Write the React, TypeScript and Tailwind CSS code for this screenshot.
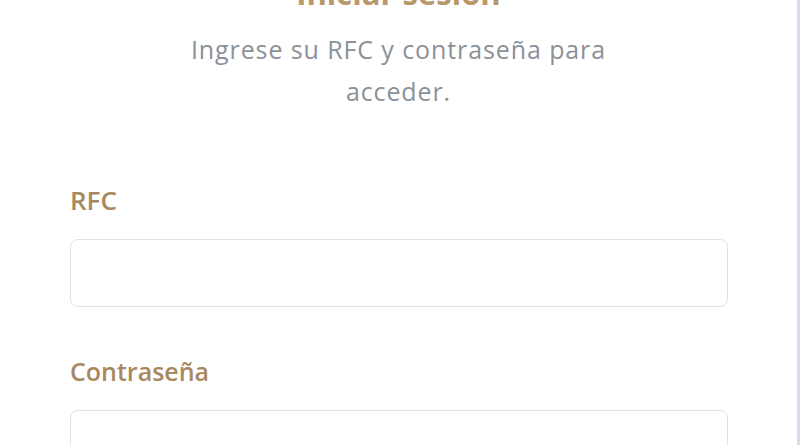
export default function App() {
  return (
    <div className="flex h-[445px] w-[800px] overflow-hidden bg-white" style={{ fontFamily: '"Open Sans", "Noto Sans", sans-serif' }}>
      <div className="flex-1 overflow-hidden">
        <div className="-mt-[27px] flex flex-col items-center">
          <h1 className="text-[31px] leading-[40px] font-bold text-[#b8976a]">Iniciar sesión</h1>
          <p className="mt-[15px] w-[470px] text-center text-[25px] leading-[42px] tracking-[0.9px] text-[#8a9199]">
            Ingrese su RFC y contraseña para acceder.
          </p>
        </div>
        <div className="mt-[72px] pl-[70px] pr-[69px]">
          <label className="block text-[26px] leading-[32px] font-semibold text-[#a8885e]">RFC</label>
          <input className="mt-[23px] block h-[68px] w-full rounded-lg border border-[#e0e0e0] bg-white" />
          <label className="mt-[48px] block text-[25px] leading-[32px] font-semibold text-[#a8885e]">Contraseña</label>
          <input type="password" className="mt-[23px] block h-[68px] w-full rounded-lg border border-[#e0e0e0] bg-white" />
        </div>
      </div>
      <div className="w-[3px] bg-[#d6dcec]" />
    </div>
  )
}
